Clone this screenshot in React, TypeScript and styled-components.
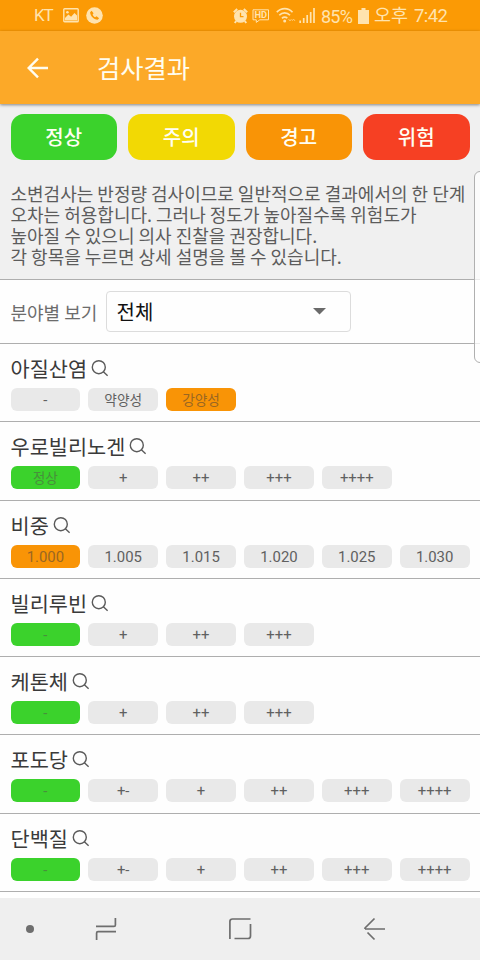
import React from 'react';
import styled, { createGlobalStyle } from 'styled-components';

const GlobalStyle = createGlobalStyle`
  * { box-sizing: border-box; }
  body {
    margin: 0;
    background: #fff;
    font-family: Roboto, "Noto Sans CJK KR", sans-serif;
  }
`;

const Screen = styled.div`
  position: relative;
  width: 480px;
  height: 960px;
  display: flex;
  flex-direction: column;
  overflow: hidden;
  background: #fefefe;
`;

const StatusBar = styled.div`
  height: 31px;
  flex: none;
  display: flex;
  align-items: center;
  justify-content: space-between;
  padding: 0 32px 0 34px;
  background: #fb9a05;
  color: #ffe3ae;
`;

const StatusGroup = styled.div`
  display: flex;
  align-items: center;
  height: 31px;
`;

const StatusText = styled.span<{ $width: number; $gap?: number; $size?: number; $tracking?: number; $drop?: number }>`
  width: ${p => p.$width}px;
  margin-left: ${p => p.$gap ?? 0}px;
  padding-top: ${p => p.$drop ?? 0}px;
  font-size: ${p => p.$size ?? 17.5}px;
  letter-spacing: ${p => p.$tracking ?? 0}px;
  line-height: 31px;
  white-space: nowrap;
`;

const StatusIcon = styled.svg<{ $gap: number }>`
  display: block;
  flex: none;
  margin-left: ${p => p.$gap}px;
  overflow: visible;
`;

const AppBar = styled.header`
  position: relative;
  height: 73px;
  flex: none;
  display: flex;
  align-items: center;
  padding-left: 26px;
  background: #fca928;
  color: #fffdf0;
  box-shadow: 0 1px 3px rgba(0, 0, 0, 0.45);
`;

const PageTitle = styled.h1`
  margin: 0 0 2px 48px;
  font: 400 25.3px/36px "Noto Sans CJK KR", sans-serif;
`;

const Intro = styled.section`
  height: 176px;
  flex: none;
  padding: 10px 10.5px 0;
  background: #f0f0f0;
  border-bottom: 1px solid #aeaeae;
`;

const Legend = styled.div`
  display: grid;
  grid-template-columns: repeat(4, 1fr);
  gap: 11px;
`;

const LegendItem = styled.div<{ $color: string }>`
  height: 45.5px;
  border-radius: 13px;
  background: ${p => p.$color};
  color: #fffef2;
  text-align: center;
  font: 500 20px/46px "Noto Sans CJK KR", sans-serif;
`;

const Description = styled.p`
  margin: 23px 0 0;
  color: #5c5c5c;
  white-space: nowrap;
  font: 400 18px/21.2px "Noto Sans CJK KR", sans-serif;
`;

const Filter = styled.div`
  height: 64px;
  flex: none;
  display: flex;
  align-items: center;
  padding-left: 10.5px;
  border-bottom: 1px solid #aeaeae;
`;

const FilterLabel = styled.label`
  width: 95px;
  color: #6c6c6c;
  white-space: nowrap;
  font: 400 18px/24px "Noto Sans CJK KR", sans-serif;
`;

const Select = styled.div`
  width: 245.5px;
  height: 41px;
  display: flex;
  align-items: center;
  justify-content: space-between;
  padding: 0 24px 0 10px;
  border: 1px solid #dcdcdc;
  border-radius: 4px;
  color: #111;
  font: 400 20px/28px "Noto Sans CJK KR", sans-serif;
`;

const Result = styled.section`
  height: 78.25px;
  flex: none;
  padding: 10px 10.5px 0;
  border-bottom: 1px solid #aeaeae;
`;

const ResultTitle = styled.h2`
  display: flex;
  align-items: center;
  gap: 4px;
  margin: 0;
  height: 28px;
  color: #3a3a3a;
  font: 400 20.8px/28px "Noto Sans CJK KR", sans-serif;
`;

const Levels = styled.div`
  display: grid;
  grid-template-columns: repeat(6, 1fr);
  gap: 8.2px;
  margin-top: 6px;
`;

const Level = styled.div<{ $color?: string; $ink?: string; $hangul: boolean }>`
  height: 23px;
  border-radius: 6px;
  background: ${p => p.$color ?? '#e9e9e9'};
  color: ${p => p.$ink ?? '#606060'};
  text-align: center;
  white-space: nowrap;
  font-size: ${p => (p.$hangul ? 13.7 : 14.9)}px;
  line-height: 24px;
`;

const EdgeHandle = styled.div`
  position: absolute;
  top: 171px;
  right: -6px;
  width: 12px;
  height: 192px;
  border: 1px solid #b0b0b0;
  border-radius: 7px;
  background: rgba(255, 255, 255, 0.75);
`;

const NavBar = styled.nav`
  height: 62px;
  margin-top: auto;
  flex: none;
  display: flex;
  align-items: center;
  padding-left: 26px;
  background: #efefef;
`;

const NavIcon = styled.svg<{ $gap?: number }>`
  display: block;
  flex: none;
  margin-left: ${p => p.$gap ?? 0}px;
  fill: none;
  stroke: #6e6e6e;
  stroke-width: 1.7;
`;

const GREEN = '#3bd22c';
const ORANGE = '#f99406';

const legend = [
  { label: '정상', color: GREEN },
  { label: '주의', color: '#f2d904' },
  { label: '경고', color: ORANGE },
  { label: '위험', color: '#f64023' },
];

type Item = { name: string; levels: string[]; active: number; tone: 'ok' | 'warn' };

const items: Item[] = [
  { name: '아질산염', levels: ['-', '약양성', '강양성'], active: 2, tone: 'warn' },
  { name: '우로빌리노겐', levels: ['정상', '+', '++', '+++', '++++'], active: 0, tone: 'ok' },
  { name: '비중', levels: ['1.000', '1.005', '1.015', '1.020', '1.025', '1.030'], active: 0, tone: 'warn' },
  { name: '빌리루빈', levels: ['-', '+', '++', '+++'], active: 0, tone: 'ok' },
  { name: '케톤체', levels: ['-', '+', '++', '+++'], active: 0, tone: 'ok' },
  { name: '포도당', levels: ['-', '+-', '+', '++', '+++', '++++'], active: 0, tone: 'ok' },
  { name: '단백질', levels: ['-', '+-', '+', '++', '+++', '++++'], active: 0, tone: 'ok' },
];

const tones = {
  ok: { color: GREEN, ink: '#48903c' },
  warn: { color: ORANGE, ink: '#9a6722' },
};

const SearchIcon = () => (
  <svg width="18" height="18" viewBox="0 0 18 18" fill="none" stroke="#5a5a5a" strokeWidth="1.4">
    <circle cx="7.8" cy="8.2" r="6.5" />
    <path d="M12.400 12.800 16.600 16.700" />
  </svg>
);

const Status = () => (
  <StatusBar>
    <StatusGroup>
      <StatusText $width={19} $size={17} $tracking={-1.2}>KT</StatusText>
      <StatusIcon $gap={10} width="16" height="15" viewBox="0 0 16 15">
        <rect x="0.8" y="0.8" width="14.4" height="13" rx="0.8" fill="none" stroke="currentColor" strokeWidth="1.4" />
        <path d="M2 12.5V10l3.4-3.4 2.7 2.2L11.5 5 14 7.6v4.9z" fill="currentColor" />
        <circle cx="4.4" cy="4.2" r="1.3" fill="currentColor" />
      </StatusIcon>
      <StatusIcon $gap={7} width="17" height="17" viewBox="0 0 17 17">
        <circle cx="8.5" cy="8.5" r="8.3" fill="currentColor" />
        <path d="M5.6 3.8 4.1 5.2c.3 3.9 3.5 7.2 7.5 7.6l1.5-1.6-2.5-2-1.5 1C7.7 9.5 7 8.6 6.6 7.5l1-1.3z" fill="#fb9a05" />
      </StatusIcon>
    </StatusGroup>
    <StatusGroup>
      <StatusIcon $gap={0} width="15" height="16" viewBox="0 0 15 16">
        <circle cx="7.5" cy="8.3" r="6.5" fill="currentColor" />
        <path d="M.8 4.3 4.2 1.1M14.2 4.3 10.8 1.1M3.2 13 1.8 15M11.8 13l1.4 2" stroke="currentColor" strokeWidth="2" />
        <path d="M7.5 4.7v4h3" fill="none" stroke="#fb9a05" strokeWidth="1.3" />
      </StatusIcon>
      <StatusIcon $gap={4} width="18" height="14" viewBox="0 0 18 14">
        <path d="M1 .8h15.500v10H7.800L4.300 13.400v-2.600H1z" fill="none" stroke="currentColor" strokeWidth="1" />
        <text x="8.800" y="9" textAnchor="middle" fontSize="9.300" fontWeight="700" fill="currentColor">HD</text>
      </StatusIcon>
      <StatusIcon $gap={6} width="19" height="15" viewBox="0 0 19 15">
        <path d="M.8 4.200C5.300-.5 12.200-.5 16.500 4.200M3.300 7.300c3-3.300 7.700-3.300 10.700 0M6 10.300c1.500-1.600 3.900-1.600 5.300 0" fill="none" stroke="currentColor" strokeWidth="1.700" />
        <circle cx="8.700" cy="13" r="1.500" fill="currentColor" />
        <path d="m12.500 11 1.500 2 1.500-2M16 13l1.500-2 1.500 2" fill="none" stroke="currentColor" strokeWidth="1" opacity=".6" />
      </StatusIcon>
      <StatusIcon $gap={4} width="16" height="15" viewBox="0 0 16 15">
        <path d="M1.200 12.500V15M4.700 10v5M8.200 7v8M11.700 4v11M15 0v15" stroke="currentColor" strokeWidth="1.700" />
      </StatusIcon>
      <StatusText $width={32} $gap={6} $size={18} $tracking={-0.8} $drop={1}>85%</StatusText>
      <StatusIcon $gap={5} width="11" height="16" viewBox="0 0 11 16">
        <path d="M3.500 0h4v2H11v14H0V2h3.500z" fill="currentColor" />
      </StatusIcon>
      <StatusText $width={36} $gap={5} $size={18.5} $drop={2}>오후</StatusText>
      <StatusText $width={34} $gap={4} $size={18.5} $tracking={-0.6} $drop={1}>7:42</StatusText>
    </StatusGroup>
  </StatusBar>
);

export default function App() {
  return (
    <>
      <GlobalStyle />
      <Screen>
        <Status />
        <AppBar>
          <svg width="23" height="22" viewBox="0 0 23 22" fill="none" stroke="currentColor" strokeWidth="2.4">
            <path d="M22 11H2.500M12 1.700 2.700 11l9.300 9.300" />
          </svg>
          <PageTitle>검사결과</PageTitle>
        </AppBar>
        <Intro>
          <Legend>
            {legend.map(l => (
              <LegendItem key={l.label} $color={l.color}>{l.label}</LegendItem>
            ))}
          </Legend>
          <Description>
            소변검사는 반정량 검사이므로 일반적으로 결과에서의 한 단계<br />
            오차는 허용합니다. 그러나 정도가 높아질수록 위험도가<br />
            높아질 수 있으니 의사 진찰을 권장합니다.<br />
            각 항목을 누르면 상세 설명을 볼 수 있습니다.
          </Description>
        </Intro>
        <Filter>
          <FilterLabel>분야별 보기</FilterLabel>
          <Select>
            전체
            <svg width="13" height="7" viewBox="0 0 13 7">
              <path d="M0 0h13L6.500 6.500z" fill="#6a6a6a" />
            </svg>
          </Select>
        </Filter>
        {items.map(item => (
          <Result key={item.name}>
            <ResultTitle>{item.name}<SearchIcon /></ResultTitle>
            <Levels>
              {item.levels.map((level, i) => {
                const tone = i === item.active ? tones[item.tone] : undefined;
                return (
                  <Level key={level} $color={tone?.color} $ink={tone?.ink} $hangul={/[가-힣]/.test(level)}>
                    {level}
                  </Level>
                );
              })}
            </Levels>
          </Result>
        ))}
        <NavBar>
          <NavIcon width="8" height="24" viewBox="0 0 8 24">
            <circle cx="4" cy="12" r="4" fill="#6e6e6e" stroke="none" />
          </NavIcon>
          <NavIcon $gap={60} width="24" height="24" viewBox="0 0 24 24">
            <path d="M2 9.400H20Q21.400 9.400 21.400 8V1M22 14.600H4Q2.600 14.600 2.600 16v7" />
          </NavIcon>
          <NavIcon $gap={110} width="24" height="24" viewBox="0 0 24 24">
            <path d="M1.900 22V4.500Q1.900 2 4.500 2H22.500M22.500 7v12Q22.500 21.500 20 21.500H6.500" />
          </NavIcon>
          <NavIcon $gap={110} width="24" height="24" viewBox="0 0 24 24">
            <path d="M23 12H3M12.500 1.500 3 11v1M5.500 15.500l7 7" />
          </NavIcon>
        </NavBar>
        <EdgeHandle />
      </Screen>
    </>
  );
}
